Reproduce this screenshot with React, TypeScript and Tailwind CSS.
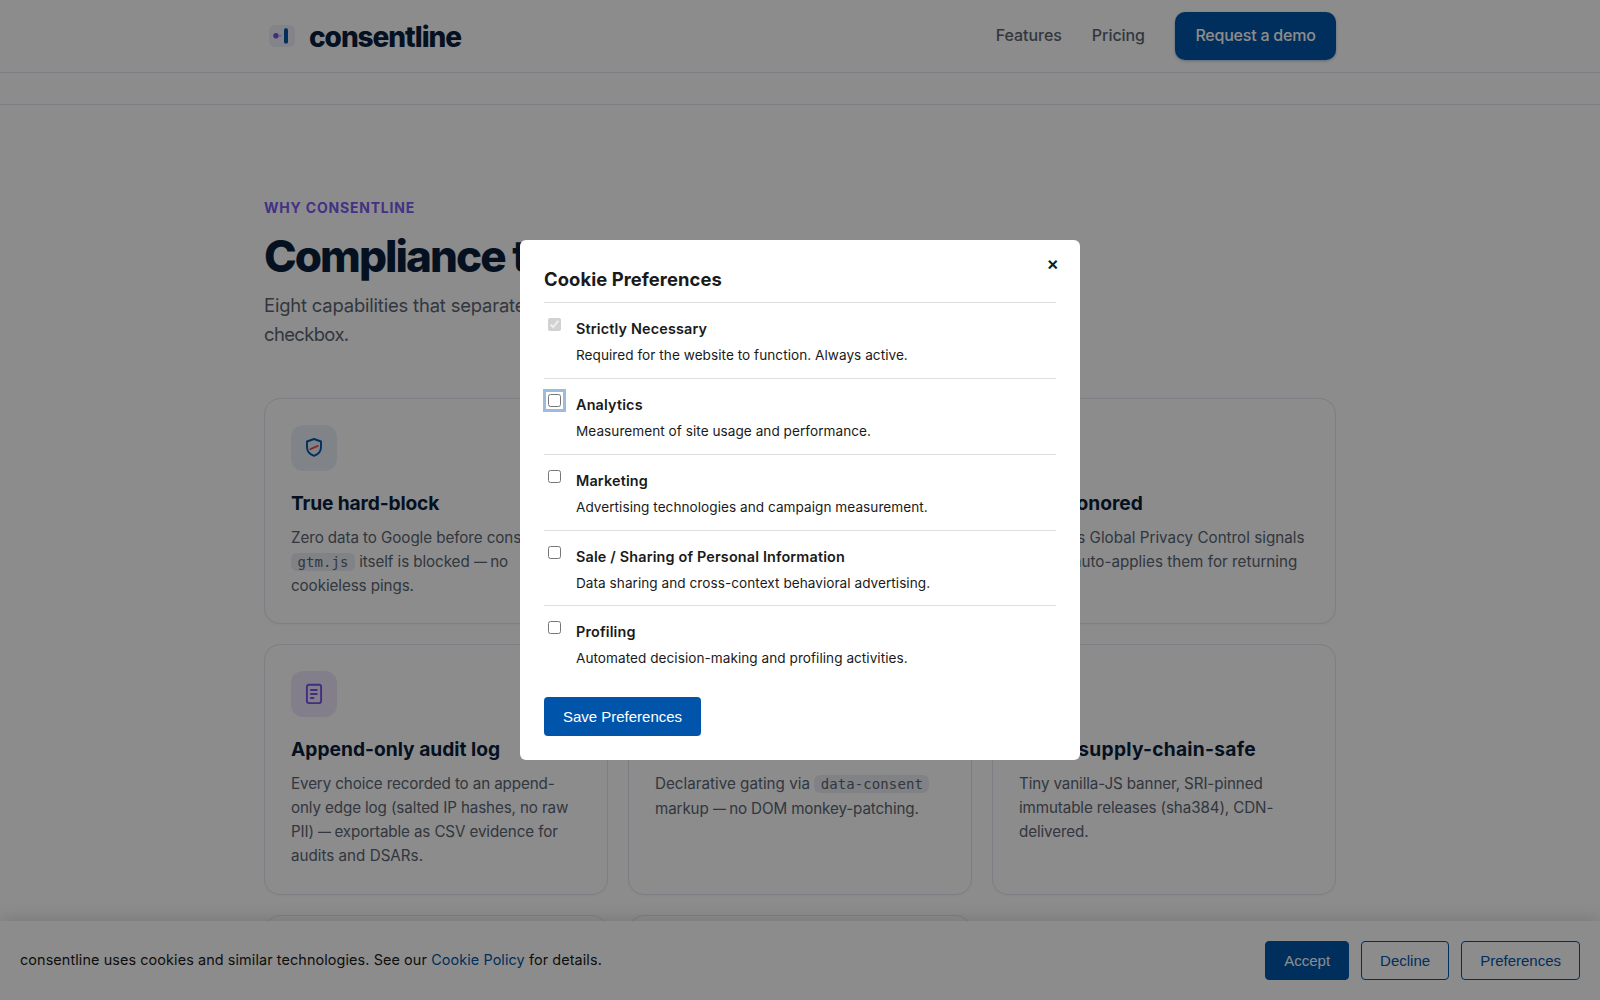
import React from "react";

const categories = [
  {
    name: "Strictly Necessary",
    text: "Required for the website to function. Always active.",
    locked: true,
  },
  {
    name: "Analytics",
    text: "Measurement of site usage and performance.",
    focused: true,
  },
  {
    name: "Marketing",
    text: "Advertising technologies and campaign measurement.",
  },
  {
    name: "Sale / Sharing of Personal Information",
    text: "Data sharing and cross-context behavioral advertising.",
  },
  {
    name: "Profiling",
    text: "Automated decision-making and profiling activities.",
  },
];

function Code({ children }: { children: React.ReactNode }) {
  return (
    <code className="rounded-md bg-[#e9edf4] px-[6.4px] py-px font-['DejaVu_Sans_Mono',monospace] text-[14px] tracking-[0.1px]">
      {children}
    </code>
  );
}

// em dash narrowed to sit close to its words
function Dash() {
  return (
    <>
      {" "}
      <span className="inline-block origin-left scale-x-85 tracking-[-3px]">—</span>{" "}
    </>
  );
}

function ShieldIcon() {
  return (
    <svg width="22" height="22" viewBox="0 0 22 22" fill="none" strokeWidth="1.9" strokeLinecap="round" strokeLinejoin="round">
      <path d="M11 2l7 2.5v5.6c0 4.2-2.8 7.4-7 8.8-4.2-1.4-7-4.6-7-8.8V4.5z" stroke="#0055aa" />
      <path d="M7.4 12.2l7.4-3.3" stroke="#e8505b" />
    </svg>
  );
}

function LogIcon() {
  return (
    <svg width="22" height="22" viewBox="0 0 22 22" fill="none" stroke="#7455e8" strokeWidth="1.9" strokeLinecap="round">
      <rect x="3.9" y="1.7" width="14.2" height="18.4" rx="2" />
      <path d="M7.9 7h5.9M7.9 11h5.9M7.9 15h2.6" />
    </svg>
  );
}

function Card({
  title,
  tone = "bg-[#e9f1f9]",
  icon,
  titleClass = "",
  textClass = "tracking-[-0.08px]",
  children,
}: {
  title?: string;
  tone?: string;
  icon?: React.ReactNode;
  titleClass?: string;
  textClass?: string;
  children?: React.ReactNode;
}) {
  return (
    <div className="rounded-2xl border border-[#e4e7f1] bg-white p-[26px] shadow-[0_1px_2px_rgba(10,31,61,0.04)]">
      <div className={`flex size-[46px] items-center justify-center rounded-xl ${tone}`}>
        {icon}
      </div>
      <h3 className={`mt-5 whitespace-nowrap text-[19.2px] font-bold leading-6 text-[#0a1f3d] ${titleClass}`}>
        {title}
      </h3>
      <p className={`mt-[11px] whitespace-nowrap text-[15.2px] leading-6 text-[#5b6573] ${textClass}`}>
        {children}
      </p>
    </div>
  );
}

function Header() {
  return (
    <header className="h-[73px] border-b border-[#e1e5ee] bg-white">
      <div className="mx-auto flex h-[72px] w-[1072px] items-center justify-between">
        <div className="flex items-center gap-[14px] pl-[5px]">
          <svg width="26" height="22" viewBox="0 0 26 22">
            <rect width="26" height="22" rx="6" fill="#eeeffa" />
            <circle cx="7" cy="10.8" r="2.7" fill="#7455e8" />
            <path d="M9.5 10.8h2.3" stroke="#b3a5ee" strokeWidth="1.4" strokeLinecap="round" />
            <rect x="15" y="3.2" width="4" height="15.3" rx="1.6" fill="#0055aa" />
          </svg>
          <span className="pt-px text-[28px] font-extrabold leading-9 tracking-[-1.06px] text-[#0a1f3d]">
            consentline
          </span>
        </div>
        <nav className="flex items-center text-base font-medium text-[#5b6573]">
          <span className="mb-0.5 tracking-[-0.05px]">Features</span>
          <span className="mb-0.5 ml-[30px] tracking-[-0.05px]">Pricing</span>
          <span className="ml-[30px] flex h-12 w-[161px] items-center justify-center rounded-[10px] bg-[#0055aa] pb-0.5 tracking-[-0.22px] text-white shadow-[0_1px_3px_rgba(0,85,170,0.35)]">
            Request a demo
          </span>
        </nav>
      </div>
    </header>
  );
}

function Features() {
  return (
    <section className="mx-auto w-[1072px] pt-[92px]">
      <p className="text-sm font-bold leading-[22px] tracking-[0.8px] text-[#7a5af0]">WHY CONSENTLINE</p>
      <h2 className="mt-[13px] text-[44px] font-extrabold leading-[48px] tracking-[-1.95px] text-[#0a1f3d]">
        Compliance that works
      </h2>
      <p className="mt-[11px] text-[18.4px] leading-[29px] tracking-[-0.17px] text-[#5b6573]">
        Eight capabilities that separate real enforcement from a decorative
        <br />
        <span className="tracking-[-0.6px]">checkbox.</span>
      </p>
      <div className="mt-[49px] grid grid-cols-3 grid-rows-[226px_251px_251px] gap-5">
        <Card title="True hard-block" icon={<ShieldIcon />} titleClass="tracking-[-0.15px]">
          Zero data to Google before consent.
          <br />
          <Code>gtm.js</Code> itself is blocked<Dash />no
          <br />
          cookieless pings.
        </Card>
        <Card />
        <Card title="GPC honored" textClass="tracking-[0.02px]">
          Respects Global Privacy Control signals
          <br />
          always auto-applies them for returning
          <br />
          visitors.
        </Card>
        <Card
          title="Append-only audit log"
          tone="bg-[#eee8fb]"
          icon={<LogIcon />}
          textClass="tracking-[-0.12px]"
        >
          Every choice recorded to an append-
          <br />
          only edge log (salted IP hashes, no raw
          <br />
          PII)<Dash />exportable as CSV evidence for
          <br />
          <span className="tracking-normal">audits and DSARs.</span>
        </Card>
        <Card title="Script gating">
          <span className="tracking-[0.01px]">Declarative gating via </span>
          <Code>data-consent</Code>
          <br />
          <span className="relative top-px tracking-[-0.13px]">
            markup<Dash />no DOM monkey-patching.
          </span>
        </Card>
        <Card title="Light, supply-chain-safe" titleClass="tracking-[0.26px]" textClass="tracking-[-0.11px]">
          Tiny vanilla-JS banner, SRI-pinned
          <br />
          immutable releases (sha384), CDN-
          <br />
          delivered.
        </Card>
        <Card />
        <Card />
      </div>
    </section>
  );
}

function CookieBanner() {
  const button =
    "flex h-[39px] items-center rounded border border-[#0055aa] px-[18px] pt-px font-['Liberation_Sans',Arial,sans-serif] text-[15px]";
  return (
    <div className="absolute inset-x-0 bottom-0 flex h-[79px] items-center justify-between bg-white px-5 shadow-[0_-2px_16px_rgba(0,0,0,0.15)]">
      <p className="pb-0.5 text-[14.4px] tracking-[0.1px] text-[#1a1a1a]">
        consentline uses cookies and similar technologies. See our{" "}
        <span className="text-[#0055aa]">Cookie Policy</span> for details.
      </p>
      <div className="flex gap-3">
        <button className={`${button} bg-[#0055aa] text-white`}>Accept</button>
        <button className={`${button} text-[#0055aa]`}>Decline</button>
        <button className={`${button} text-[#0055aa]`}>Preferences</button>
      </div>
    </div>
  );
}

function PreferencesModal() {
  return (
    <div className="absolute inset-0 flex items-center justify-center bg-black/45">
      <div className="relative h-[520px] w-[560px] rounded-md bg-white p-6 text-[#1a1a1a]">
        <button className="absolute right-[21px] top-[11px] text-[18.5px] font-semibold leading-6">×</button>
        <h2 className="mb-[8.4px] text-[18.4px] font-bold leading-[30px] tracking-[0.08px]">Cookie Preferences</h2>
        {categories.map((c) => (
          <div key={c.name} className="flex h-[75.75px] items-start border-t border-[#dddddd] pt-[14px]">
            <input
              type="checkbox"
              defaultChecked={c.locked}
              disabled={c.locked}
              className={`ml-1 mt-px size-[13px] ${c.focused ? "outline-3 outline-offset-2 outline-[#9dbbde]" : ""}`}
            />
            <div className="ml-[15px]">
              <div className="text-[14.4px] font-semibold leading-6 tracking-[0.16px]">{c.name}</div>
              <div className="mt-[3.08px] text-[13.6px] leading-[22px] tracking-[0.04px]">{c.text}</div>
            </div>
          </div>
        ))}
        <button className="mt-4 h-[39px] w-[157px] rounded bg-[#0055aa] pt-px font-['Liberation_Sans',Arial,sans-serif] text-[15px] text-white">
          Save Preferences
        </button>
      </div>
    </div>
  );
}

export default function App() {
  return (
    <div className="relative h-[1000px] w-[1600px] overflow-hidden bg-white font-[Inter,sans-serif]">
      <Header />
      <div className="h-8 border-b border-[#e1e5ee]" />
      <Features />
      <CookieBanner />
      <PreferencesModal />
    </div>
  );
}
